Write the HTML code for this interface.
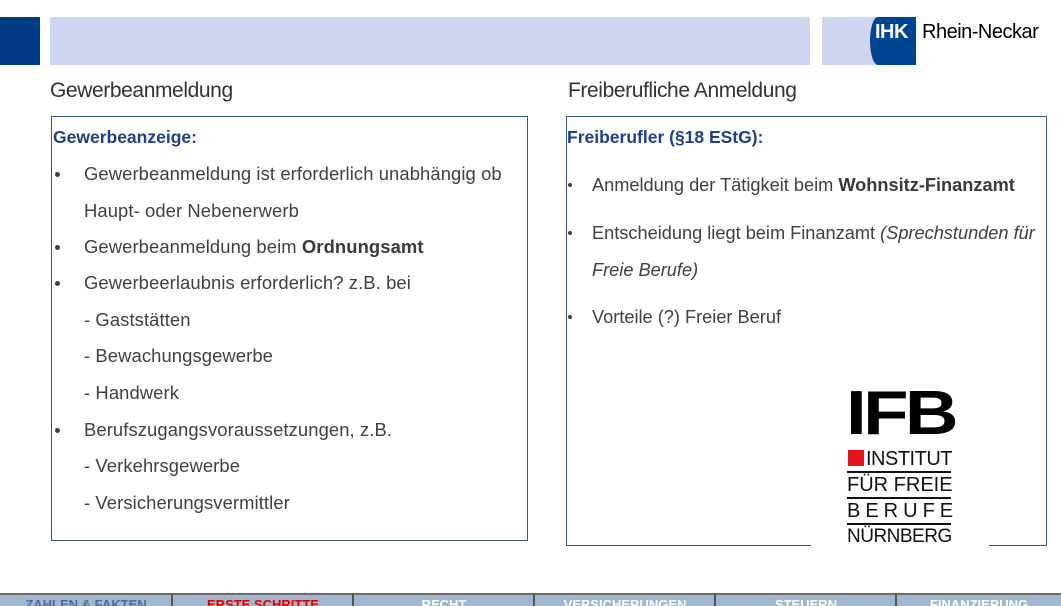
<!DOCTYPE html>
<html><head><meta charset="utf-8"><style>
body{margin:0;width:1061px;height:606px;position:relative;background:#fff;font-family:"Liberation Sans",sans-serif;overflow:hidden;color:#404040}
.a{position:absolute;white-space:nowrap}
.t{font-size:18.4px;line-height:20px;letter-spacing:0.1px}
.r{font-size:18.2px;line-height:20px}
.b{font-weight:bold;color:#3a3a3a}
.h{font-weight:bold;color:#1f3f8a;font-size:17.5px}
.dot{position:absolute;width:5px;height:5px;border-radius:50%;background:#404040}
.nav{position:absolute;top:593px;height:13px;background:#a2b6cd;border-top:2px solid #6d6d6d;box-sizing:border-box;font:bold 13px "Liberation Sans",sans-serif;text-align:center;color:#fff;line-height:20px;overflow:hidden}
</style></head><body>
<div class="a" style="left:0;top:17px;width:40px;height:48px;background:#003b85"></div>
<div class="a" style="left:50px;top:17px;width:760px;height:48px;background:#cfd5f0"></div>
<div class="a" style="left:822px;top:17px;width:60px;height:48px;background:#cfd5f0"></div>
<div class="a" style="left:870px;top:17px;width:46px;height:48px;background:#004593;border-radius:8px 0 0 8px / 24px 0 0 24px"></div>
<div class="a" style="left:875px;top:21px;color:#fff;font-weight:bold;font-size:20px;letter-spacing:-0.5px">IHK</div>
<div class="a" style="left:922px;top:21px;color:#000;font-size:20px;letter-spacing:-0.5px">Rhein-Neckar</div>

<div class="a" style="left:50px;top:79px;font-size:21px;color:#333;letter-spacing:-0.4px">Gewerbeanmeldung</div>
<div class="a" style="left:568px;top:79px;font-size:21px;color:#333;letter-spacing:-0.4px">Freiberufliche Anmeldung</div>

<div class="a" style="left:51px;top:116px;width:475px;height:423px;border:1.5px solid #2f5597"></div>
<div class="a" style="left:566px;top:116px;width:479px;height:428px;border:1.5px solid #2f5597"></div>

<div class="a h" style="left:53px;top:127px">Gewerbeanzeige:</div>
<div class="dot" style="left:55px;top:172px"></div>
<div class="a t" style="left:84px;top:164px">Gewerbeanmeldung ist erforderlich unabhängig ob</div>
<div class="a t" style="left:84px;top:201px">Haupt- oder Nebenerwerb</div>
<div class="dot" style="left:55px;top:245px"></div>
<div class="a t" style="left:84px;top:237px">Gewerbeanmeldung beim <span class="b">Ordnungsamt</span></div>
<div class="dot" style="left:55px;top:281px"></div>
<div class="a t" style="left:84px;top:273px">Gewerbeerlaubnis erforderlich? z.B. bei</div>
<div class="a t" style="left:84px;top:310px">- Gaststätten</div>
<div class="a t" style="left:84px;top:346px">- Bewachungsgewerbe</div>
<div class="a t" style="left:84px;top:383px">- Handwerk</div>
<div class="dot" style="left:55px;top:428px"></div>
<div class="a t" style="left:84px;top:420px">Berufszugangsvoraussetzungen, z.B.</div>
<div class="a t" style="left:84px;top:456px">- Verkehrsgewerbe</div>
<div class="a t" style="left:84px;top:493px">- Versicherungsvermittler</div>

<div class="a h" style="left:567px;top:127px">Freiberufler (§18 EStG):</div>
<div class="dot" style="left:568px;top:183px;width:4px;height:4px"></div>
<div class="a r" style="left:592px;top:175px">Anmeldung der Tätigkeit beim <span class="b">Wohnsitz-Finanzamt</span></div>
<div class="dot" style="left:568px;top:231px;width:4px;height:4px"></div>
<div class="a r" style="left:592px;top:223px">Entscheidung liegt beim Finanzamt <i>(Sprechstunden für</i></div>
<div class="a r" style="left:592px;top:260px"><i>Freie Berufe)</i></div>
<div class="dot" style="left:568px;top:315px;width:4px;height:4px"></div>
<div class="a r" style="left:592px;top:307px">Vorteile (?) Freier Beruf</div>

<div class="a" style="left:811px;top:378px;width:178px;height:172px;background:#fff"></div>
<div class="a" style="left:846px;top:383px;font:900 62px/62px 'Liberation Sans',sans-serif;color:#000;letter-spacing:-3px;transform:scaleX(1.2);transform-origin:left">IFB</div>
<div class="a" style="left:848px;top:450px;width:16px;height:16px;background:#e8141c"></div>
<div class="a" style="left:866px;top:448px;font-size:20px;color:#111;letter-spacing:-0.5px">INSTITUT</div>
<div class="a" style="left:847px;top:471px;width:104px;height:2px;background:#111"></div>
<div class="a" style="left:847px;top:474px;font-size:20px;color:#111;letter-spacing:0px">FÜR FREIE</div>
<div class="a" style="left:847px;top:497px;width:104px;height:2px;background:#111"></div>
<div class="a" style="left:847px;top:500px;font-size:20px;color:#111;letter-spacing:5px">BERUFE</div>
<div class="a" style="left:847px;top:523px;width:104px;height:2px;background:#111"></div>
<div class="a" style="left:847px;top:526px;font-size:19px;color:#111;letter-spacing:-0.5px">NÜRNBERG</div>

<div class="nav" style="left:0;width:172px;color:#4d6e9a">ZAHLEN &amp; FAKTEN</div>
<div class="nav" style="left:171px;width:182px;border-left:2px solid #555;color:#e00000">ERSTE SCHRITTE</div>
<div class="nav" style="left:352px;width:182px;border-left:2px solid #555">RECHT</div>
<div class="nav" style="left:533px;width:182px;border-left:2px solid #555">VERSICHERUNGEN</div>
<div class="nav" style="left:714px;width:182px;border-left:2px solid #555">STEUERN</div>
<div class="nav" style="left:895px;width:166px;border-left:2px solid #555">FINANZIERUNG</div>
</body></html>
